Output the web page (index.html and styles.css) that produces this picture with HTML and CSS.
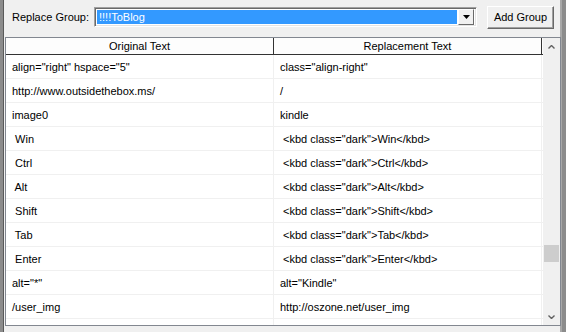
FILE: index.html
```html
<!DOCTYPE html>
<html lang="en">
<head>
  <meta charset="UTF-8">
  <title>Replace Group</title>
  <link rel="stylesheet" href="styles.css">
</head>
<body>
  <div class="window">
    <div class="content">
      <div class="toolbar">
        <label class="label">Replace Group:</label>
        <div class="combo">
          <div class="combo-value">!!!!ToBlog</div>
          <div class="combo-btn">
            <svg width="7" height="4" viewBox="0 0 7 4"><path d="M0 0h7L3.5 4z" fill="#000"/></svg>
          </div>
        </div>
        <button class="btn">Add Group</button>
      </div>
      <div class="list">
        <div class="grid">
          <div class="row header">
            <div class="cell">Original Text</div>
            <div class="cell">Replacement Text</div>
          </div>
          <div class="row"><div class="cell">align="right" hspace="5"</div><div class="cell">class="align-right"</div></div>
          <div class="row"><div class="cell">http://www.outsidethebox.ms/</div><div class="cell">/</div></div>
          <div class="row"><div class="cell">image0</div><div class="cell">kindle</div></div>
          <div class="row"><div class="cell"> Win</div><div class="cell"> &lt;kbd class="dark"&gt;Win&lt;/kbd&gt;</div></div>
          <div class="row"><div class="cell"> Ctrl</div><div class="cell"> &lt;kbd class="dark"&gt;Ctrl&lt;/kbd&gt;</div></div>
          <div class="row"><div class="cell"> Alt</div><div class="cell"> &lt;kbd class="dark"&gt;Alt&lt;/kbd&gt;</div></div>
          <div class="row"><div class="cell"> Shift</div><div class="cell"> &lt;kbd class="dark"&gt;Shift&lt;/kbd&gt;</div></div>
          <div class="row"><div class="cell"> Tab</div><div class="cell"> &lt;kbd class="dark"&gt;Tab&lt;/kbd&gt;</div></div>
          <div class="row"><div class="cell"> Enter</div><div class="cell"> &lt;kbd class="dark"&gt;Enter&lt;/kbd&gt;</div></div>
          <div class="row"><div class="cell">alt="*"</div><div class="cell">alt="Kindle"</div></div>
          <div class="row"><div class="cell">/user_img</div><div class="cell">http://oszone.net/user_img</div></div>
          <div class="row"><div class="cell"></div><div class="cell"></div></div>
        </div>
        <div class="scrollbar">
          <div class="arrow">
            <svg width="7" height="4" viewBox="0 0 7 4"><path d="M0.5 3.5L3.5 0.5L6.5 3.5" fill="none" stroke="#606060" stroke-width="1.4"/></svg>
          </div>
          <div class="track">
            <div class="thumb"></div>
          </div>
          <div class="arrow">
            <svg width="7" height="4" viewBox="0 0 7 4"><path d="M0.5 0.5L3.5 3.5L6.5 0.5" fill="none" stroke="#606060" stroke-width="1.4"/></svg>
          </div>
        </div>
      </div>
    </div>
  </div>
</body>
</html>
```

FILE: styles.css
```css
html, body {
  margin: 0;
  padding: 0;
}
body {
  width: 566px;
  height: 332px;
  overflow: hidden;
  background: #f0f0f0;
  font-family: "Liberation Sans", Arial, sans-serif;
  font-size: 11px;
  color: #000;
}
.window {
  box-sizing: border-box;
  height: 332px;
  border-left: 3px solid #8c8c8c;
  border-right: 4px solid #8c8c8c;
  box-shadow: inset 1px 0 0 #5a5a5a, inset -2px 0 0 #a8a8a8;
  display: flex;
}
.content {
  flex: 1;
  padding-left: 2px;
  padding-right: 1px;
}
.toolbar {
  height: 34px;
  display: flex;
  align-items: center;
}
.label {
  width: 89px;
  padding-left: 7px;
  box-sizing: border-box;
  white-space: nowrap;
  flex: none;
}
.combo {
  width: 383px;
  height: 20px;
  box-sizing: border-box;
  border: 1px solid;
  border-color: #a0a0a0 #fff #fff #a0a0a0;
  box-shadow: inset 1px 1px 0 #696969, inset -1px -1px 0 #e3e3e3;
  background: #fff;
  display: flex;
  padding: 2px;
  flex: none;
}
.combo-value {
  flex: 1;
  background: #3399ff;
  color: #fff;
  padding-left: 2px;
  line-height: 14px;
  margin-right: 1px;
}
.combo-btn {
  width: 16px;
  box-sizing: border-box;
  background: #f0f0f0;
  border: 1px solid;
  border-color: #fff #696969 #696969 #fff;
  display: flex;
  align-items: center;
  justify-content: center;
  margin-top: -1px;
  margin-bottom: -1px;
}
.btn {
  margin-left: 10px;
  width: 67px;
  height: 23px;
  font: inherit;
  color: #000;
  background: #f0f0f0;
  border: 1px solid;
  border-color: #fff #696969 #696969 #fff;
  box-shadow: inset -1px -1px 0 #a0a0a0;
  padding: 0;
  flex: none;
}
.list {
  margin-top: 3px;
  height: 289px;
  box-sizing: border-box;
  border: 1px solid #828790;
  background: #fff;
  display: flex;
}
.grid {
  flex: 1;
  overflow: hidden;
}
.row {
  display: flex;
  height: 24px;
  box-sizing: border-box;
  border-bottom: 1px solid #f0f0f0;
}
.row .cell {
  white-space: pre;
  padding-left: 6px;
  line-height: 24px;
  box-sizing: border-box;
  border-right: 1px solid #f0f0f0;
  width: 268px;
}
.header {
  height: 17px;
  border-bottom: 1px solid #333;
  background: #fdfdfd;
}
.header .cell {
  text-align: center;
  padding-left: 0;
  line-height: 16px;
  border-right: 1px solid #333;
}
.scrollbar {
  width: 17px;
  background: #f0f0f0;
  display: flex;
  flex-direction: column;
  flex: none;
}
.arrow {
  height: 17px;
  display: flex;
  align-items: center;
  justify-content: center;
}
.track {
  flex: 1;
}
.thumb {
  margin-top: 190px;
  margin-left: 1px;
  width: 15px;
  height: 17px;
  background: #cdcdcd;
}
```
